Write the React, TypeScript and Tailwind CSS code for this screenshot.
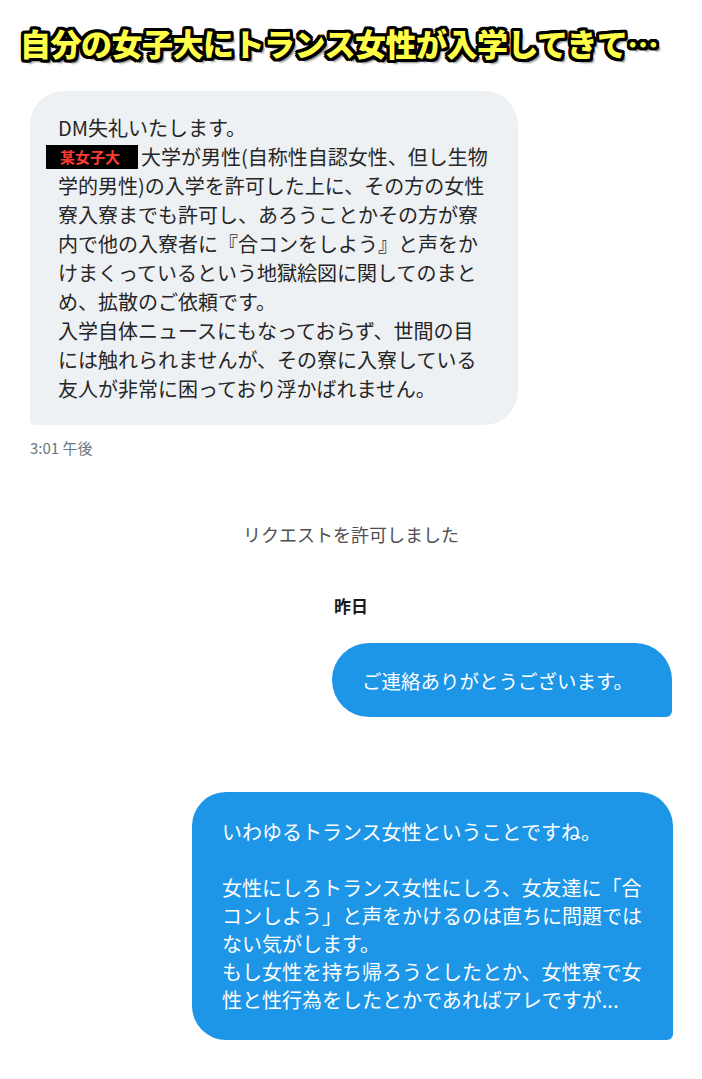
import React from "react";

const jp = "font-['Noto_Sans_CJK_JP','Noto_Sans',sans-serif]";

const grayLines = [
  "DM失礼いたします。",
  "__redact__",
  "学的男性)の入学を許可した上に、その方の女性",
  "寮入寮までも許可し、あろうことかその方が寮",
  "内で他の入寮者に『合コンをしよう』と声をか",
  "けまくっているという地獄絵図に関してのまと",
  "め、拡散のご依頼です。",
  "入学自体ニュースにもなっておらず、世間の目",
  "には触れられませんが、その寮に入寮している",
  "友人が非常に困っており浮かばれません。",
];

const blueLines = [
  "いわゆるトランス女性ということですね。",
  "",
  "女性にしろトランス女性にしろ、女友達に「合",
  "コンしよう」と声をかけるのは直ちに問題では",
  "ない気がします。",
  "もし女性を持ち帰ろうとしたとか、女性寮で女",
  "性と性行為をしたとかであればアレですが...",
];

export default function App() {
  return (
    <div className={`w-[702px] h-[1079px] bg-white overflow-hidden ${jp}`}>
      <h1
        className="pt-[26px] pl-[20px] text-[31px] leading-[34px] font-black text-[#ffff4a] whitespace-nowrap tracking-[-0.5px] [text-shadow:3px_0_0_#000,-3px_0_0_#000,0_3px_0_#000,0_-3px_0_#000,2px_2px_0_#000,-2px_2px_0_#000,2px_-2px_0_#000,-2px_-2px_0_#000,3px_2px_0_#000,-3px_2px_0_#000,3px_-2px_0_#000,-3px_-2px_0_#000,2px_3px_0_#000,-2px_3px_0_#000,2px_-3px_0_#000,-2px_-3px_0_#000,4px_4px_2px_#888]"
      >
        自分の女子大にトランス女性が入学してきて…
      </h1>

      {/* received message */}
      <div className="mt-[31px] ml-[30px] w-[488px] bg-[#eef1f3] rounded-[34px] rounded-bl-[5px] px-[28px] py-[22px] text-[20px] leading-[29px] text-[#262626] whitespace-nowrap">
        {grayLines.map((l, i) =>
          l === "__redact__" ? (
            <div key={i} className="flex items-center">
              <span className="-ml-[12px] mr-[3px] inline-flex items-center w-[92px] h-[24px] bg-black pl-[14px] text-[15px] leading-[24px] font-bold text-[#ff3b30]">
                某女子大
              </span>
              <span>大学が男性(自称性自認女性、但し生物</span>
            </div>
          ) : (
            <div key={i}>{l}</div>
          )
        )}
      </div>
      <div className="ml-[30px] mt-[13px] text-[15px] leading-[20px] text-[#6b7782]">
        3:01 午後
      </div>

      <div className="mt-[63px] text-center text-[18px] leading-[26px] text-[#505050]">
        リクエストを許可しました
      </div>
      <div className="mt-[47px] text-center text-[17px] leading-[24px] font-bold text-[#1a1a1a]">
        昨日
      </div>

      {/* sent messages */}
      <div className="mt-[25px] flex justify-end pr-[30px]">
        <div className="w-[340px] h-[74px] bg-[#1d96e8] rounded-[37px] rounded-br-[6px] pl-[30px] flex items-center text-[19.5px] leading-[29px] text-white whitespace-nowrap">
          ご連絡ありがとうございます。
        </div>
      </div>

      <div className="mt-[75px] flex justify-end pr-[29px]">
        <div className="w-[481px] bg-[#1d96e8] rounded-[34px] rounded-br-[6px] pl-[30px] py-[26px] text-[20px] leading-[28px] text-white whitespace-nowrap">
          {blueLines.map((l, i) => (
            <div key={i} className="h-[28px]">
              {l}
            </div>
          ))}
        </div>
      </div>
    </div>
  );
}
